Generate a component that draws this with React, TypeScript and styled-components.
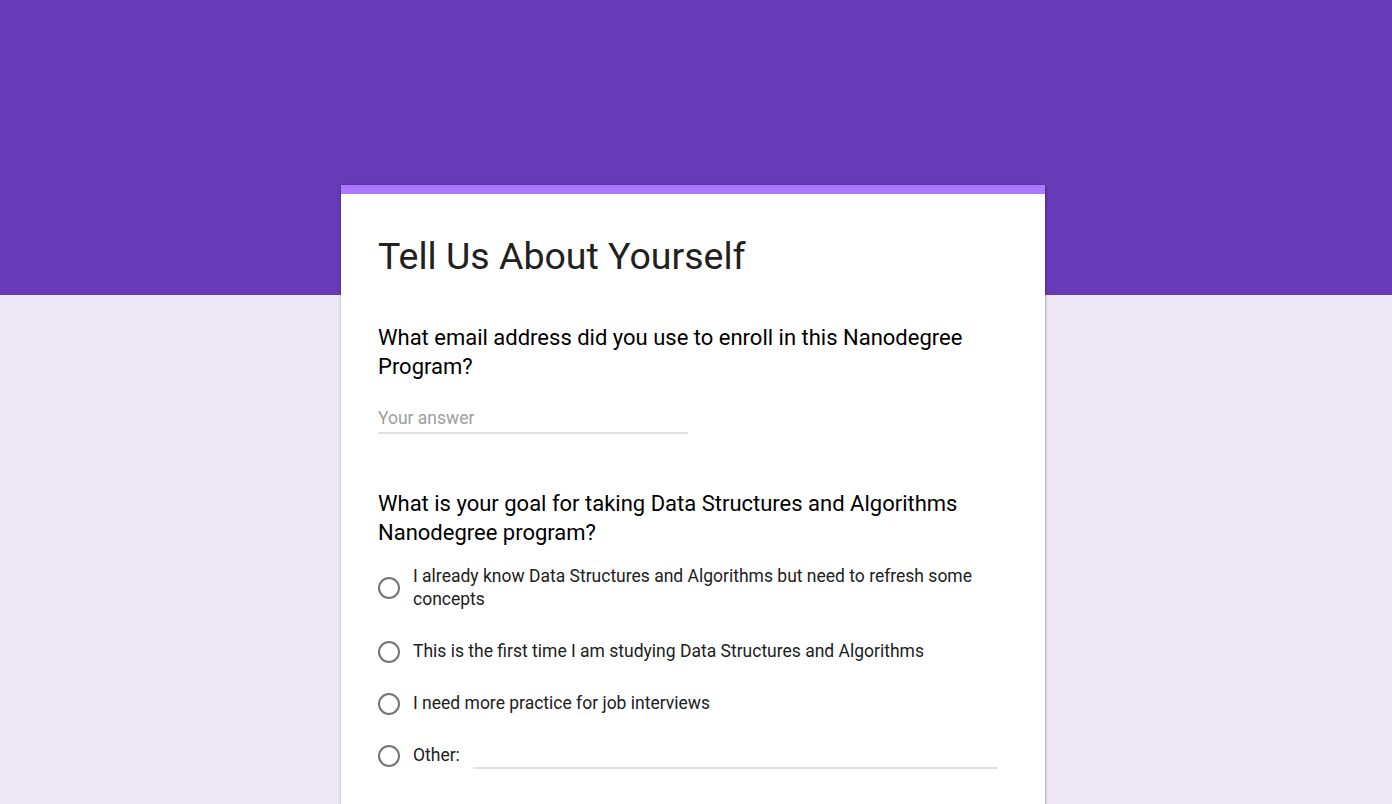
import React from "react";
import styled, { createGlobalStyle } from "styled-components";

const Global = createGlobalStyle`
  html, body { margin: 0; padding: 0; }
  body {
    font-family: Roboto, "Noto Sans", Arial, sans-serif;
    background: #ede7f6;
    overflow: hidden;
  }
`;

const Page = styled.div`
  min-height: 804px;
  background: linear-gradient(#673ab7 0, #673ab7 295px, #ede7f6 295px);
  padding-top: 185px;
`;

const Card = styled.div`
  width: 704px;
  margin-left: calc(50% - 355px);
  background: #fff;
  border-top: 9px solid #ac78ff;
  box-shadow: 0 1px 3px rgba(0, 0, 0, 0.25), 1px 0 2px rgba(0, 0, 0, 0.12);
  padding: 38px 37px 40px;
  box-sizing: border-box;
  min-height: 640px;
`;

const Title = styled.h1`
  margin: 0;
  font-size: 37.5px;
  font-weight: 400;
  line-height: 48px;
  color: #212121;
`;

const Question = styled.section<{ $gap: number }>`
  margin-top: ${(p) => p.$gap}px;
`;

const QuestionText = styled.div`
  font-size: 22px;
  line-height: 29px;
  color: #000;
  max-width: 610px;
`;

const AnswerInput = styled.div`
  margin-top: 26px;
  width: 310px;
  border-bottom: 2px solid #e0e0e0;
  font-size: 17.5px;
  line-height: 22px;
  padding-bottom: 3px;
  color: #9e9e9e;
`;

const Options = styled.div`
  margin-top: 18px;
  display: flex;
  flex-direction: column;
  gap: 29px;
`;

const Option = styled.label`
  display: flex;
  align-items: center;
  gap: 13px;
  font-size: 17.5px;
  line-height: 23px;
  color: #212121;
`;

const Radio = styled.span`
  flex: 0 0 auto;
  width: 18px;
  height: 18px;
  border: 2px solid #757575;
  border-radius: 50%;
`;

const OptionText = styled.span`
  max-width: 590px;
`;

const OtherLine = styled.span`
  flex: 1;
  align-self: flex-end;
  margin-right: 10px;
  margin-bottom: -2px;
  border-bottom: 2px solid #e0e0e0;
  height: 0;
`;

const options = [
  "I already know Data Structures and Algorithms but need to refresh some concepts",
  "This is the first time I am studying Data Structures and Algorithms",
  "I need more practice for job interviews",
];

export default function App() {
  return (
    <>
      <Global />
      <Page>
        <Card>
          <Title>Tell Us About Yourself</Title>
          <Question $gap={43}>
            <QuestionText>
              What email address did you use to enroll in this Nanodegree Program?
            </QuestionText>
            <AnswerInput>Your answer</AnswerInput>
          </Question>
          <Question $gap={55}>
            <QuestionText>
              What is your goal for taking Data Structures and Algorithms Nanodegree program?
            </QuestionText>
            <Options>
              {options.map((o) => (
                <Option key={o}>
                  <Radio />
                  <OptionText>{o}</OptionText>
                </Option>
              ))}
              <Option>
                <Radio />
                <OptionText>Other:</OptionText>
                <OtherLine />
              </Option>
            </Options>
          </Question>
        </Card>
      </Page>
    </>
  );
}
